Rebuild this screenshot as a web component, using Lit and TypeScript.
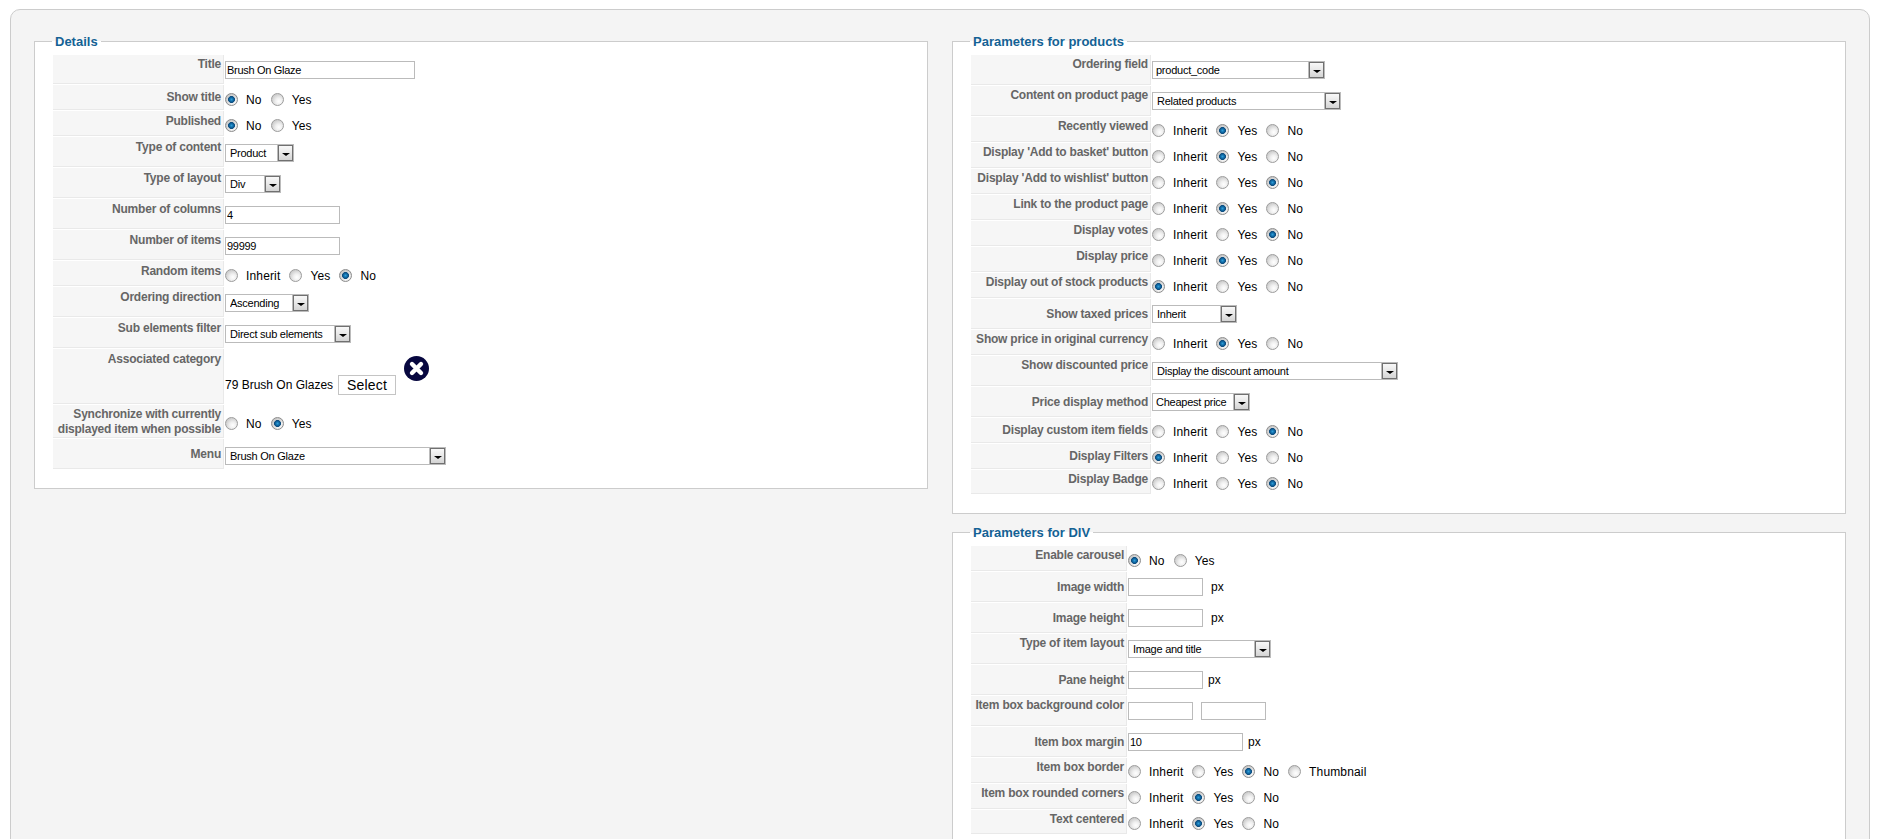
import { LitElement, html, css } from "lit";
import { customElement } from "lit/decorators.js";
import { styleMap } from "lit/directives/style-map.js";

type Ctl =
  | { t: "text"; w: number; v?: string; after?: string; gap?: number }
  | { t: "select"; w: number; v: string; pad?: number }
  | { t: "radio"; opts: string[]; on: number }
  | { t: "pair" }
  | { t: "category" };

interface Row { label: string; h: number; pad: number; top: number; c: Ctl; }

const IYN = ["Inherit", "Yes", "No"];
const r = (label: string, h: number, pad: number, top: number, c: Ctl): Row => ({ label, h, pad, top, c });
const radio = (label: string, on: number, pad = 2, h = 26, opts = IYN, top = 7) =>
  r(label, h, pad, top, { t: "radio", opts, on });

const details: Row[] = [
  r("Title", 30, 2, 6, { t: "text", w: 190, v: "Brush On Glaze" }),
  radio("Show title", 0, 5, 26, ["No", "Yes"], 8),
  radio("Published", 0, 3, 26, ["No", "Yes"], 8),
  r("Type of content", 31, 3, 7, { t: "select", w: 69, v: "Product" }),
  r("Type of layout", 31, 3, 7, { t: "select", w: 56, v: "Div" }),
  r("Number of columns", 31, 3, 7, { t: "text", w: 115, v: "4" }),
  r("Number of items", 31, 3, 7, { t: "text", w: 115, v: "99999" }),
  radio("Random items", 2, 3, 26, IYN, 8),
  r("Ordering direction", 31, 3, 7, { t: "select", w: 84, v: "Ascending" }),
  r("Sub elements filter", 31, 3, 7, { t: "select", w: 126, v: "Direct sub elements" }),
  r("Associated category", 56, 3, 7, { t: "category" }),
  radio("Synchronize with currently displayed item when possible", 1, 2, 34, ["No", "Yes"], 12),
  r("Menu", 31, 8, 8, { t: "select", w: 221, v: "Brush On Glaze" }),
];

const products: Row[] = [
  r("Ordering field", 31, 2, 6, { t: "select", w: 173, v: "product_code", pad: 3 }),
  r("Content on product page", 31, 2, 6, { t: "select", w: 189, v: "Related products" }),
  radio("Recently viewed", 1),
  radio("Display 'Add to basket' button", 1),
  radio("Display 'Add to wishlist' button", 2),
  radio("Link to the product page", 1),
  radio("Display votes", 2),
  radio("Display price", 1),
  radio("Display out of stock products", 0),
  r("Show taxed prices", 31, 8, 6, { t: "select", w: 85, v: "Inherit" }),
  radio("Show price in original currency", 1),
  r("Show discounted price", 31, 2, 6, { t: "select", w: 246, v: "Display the discount amount" }),
  r("Price display method", 31, 8, 6, { t: "select", w: 98, v: "Cheapest price", pad: 3 }),
  radio("Display custom item fields", 2, 5),
  radio("Display Filters", 0, 5),
  radio("Display Badge", 2, 2, 25),
];

const div: Row[] = [
  radio("Enable carousel", 0, 2, 26, ["No", "Yes"], 8),
  r("Image width", 31, 8, 6, { t: "text", w: 75, after: "px", gap: 8 }),
  r("Image height", 31, 8, 6, { t: "text", w: 75, after: "px", gap: 8 }),
  r("Type of item layout", 31, 2, 6, { t: "select", w: 143, v: "Image and title" }),
  r("Pane height", 31, 8, 6, { t: "text", w: 75, after: "px", gap: 5 }),
  r("Item box background color", 31, 2, 6, { t: "pair" }),
  r("Item box margin", 31, 8, 6, { t: "text", w: 115, v: "10", after: "px", gap: 5 }),
  radio("Item box border", 2, 2, 26, ["Inherit", "Yes", "No", "Thumbnail"]),
  radio("Item box rounded corners", 1),
  radio("Text centered", 1, 2, 25),
];

@customElement("app-root")
export class AppRoot extends LitElement {
  static styles = css`
    :host {
      display: block;
      height: 839px;
      overflow: hidden;
      background: #fff;
      font-family: "Liberation Sans", Arial, sans-serif;
      color: #000;
    }
    .panel {
      margin: 9px 7px 0 10px;
      height: 900px;
      box-sizing: border-box;
      background: #f4f4f4;
      border: 1px solid #ccc;
      border-radius: 10px 10px 0 0;
      padding: 24px 23px 0;
      display: grid;
      grid-template-columns: 894px 894px;
      column-gap: 24px;
      align-items: start;
    }
    .col { display: flex; flex-direction: column; gap: 11px; min-width: 0; }
    fieldset {
      margin: 0;
      min-width: 0;
      background: #fff;
      border: 1px solid #ccc;
      padding: 6px 18px 18px;
    }
    legend {
      margin-left: -1px;
      padding: 0 3px;
      font-size: 13px;
      line-height: 15px;
      font-weight: bold;
      color: #146295;
    }
    .row { display: flex; }
    .w171 { --key: 171px; }
    .w180 { --key: 180px; }
    .w156 { --key: 156px; }
    .key {
      flex: none;
      width: var(--key);
      box-sizing: border-box;
      margin-bottom: 1px;
      background: #f6f6f6;
      border-right: 1px solid #e9e9e9;
      border-bottom: 1px solid #e9e9e9;
      padding-right: 2px;
      text-align: right;
      font-size: 12px;
      letter-spacing: -0.22px;
      line-height: 15px;
      font-weight: bold;
      color: #666;
    }
    .val {
      flex: 1;
      display: flex;
      align-items: flex-start;
      margin-left: 1px;
      font-size: 12px;
      line-height: 14px;
    }
    input[type="text"] {
      box-sizing: border-box;
      flex: none;
      height: 18px;
      margin: 0;
      padding: 0 1px;
      background: #fff;
      border: 1px solid #bbb;
      border-radius: 0;
      font: 11px/16px "Liberation Sans", Arial, sans-serif;
      letter-spacing: -0.3px;
      color: #000;
      outline: none;
    }
    input.second[type="text"] { margin-left: 8px; }
    .sel { position: relative; flex: none; height: 18px; display: block; }
    select {
      appearance: none;
      -webkit-appearance: none;
      box-sizing: border-box;
      display: block;
      width: 100%;
      height: 18px;
      margin: 0;
      padding: 0 0 0 var(--sp, 4px);
      background: #fff;
      border: 1px solid #bbb;
      border-radius: 0;
      font: 11px/16px "Liberation Sans", Arial, sans-serif;
      letter-spacing: -0.25px;
      color: #000;
      outline: none;
    }
    .arrow {
      position: absolute;
      top: 0;
      right: 0;
      width: 17px;
      height: 18px;
      box-sizing: border-box;
      border: 1px solid #bbb;
      pointer-events: none;
      display: flex;
    }
    .arrow i {
      flex: 1;
      display: flex;
      align-items: center;
      justify-content: center;
      border: 1px solid #707070;
      background: linear-gradient(#f8f8f8, #e6e6e6 55%, #d4d4d4);
    }
    .arrow b {
      width: 0;
      height: 0;
      margin-top: 3px;
      border-left: 4px solid transparent;
      border-right: 4px solid transparent;
      border-top: 3px solid #000;
    }
    .opt { display: flex; align-items: flex-start; margin-right: 9px; letter-spacing: 0.15px; }
    input[type="radio"] {
      appearance: none;
      -webkit-appearance: none;
      flex: none;
      box-sizing: border-box;
      width: 13px;
      height: 13px;
      margin: 0 8px 0 0;
      border-radius: 50%;
      border: 1px solid #9c9c9c;
      background: radial-gradient(circle 7px at 62% 66%, #fff 0, #f0f0f0 45%, #cfcfcf 100%);
    }
    input[type="radio"]:checked {
      border-color: #8c8c8c;
      background:
        radial-gradient(circle 3.8px at 50% 50%, #2f9ed8 0, #126fab 45%, #0a4a7c 82%, rgba(10, 74, 124, 0) 100%),
        radial-gradient(circle 7px at 62% 66%, #fff 0, #ececec 50%, #c8c8c8 100%);
    }
    .px { padding-top: 2px; }
    .cat-text { padding-top: 22px; }
    .btn {
      flex: none;
      box-sizing: border-box;
      width: 58px;
      height: 20px;
      margin: 19px 0 0 5px;
      padding: 0;
      background: #fff;
      border: 1px solid #c4c4c4;
      border-radius: 0;
      font: 14px/18px "Liberation Sans", Arial, sans-serif;
      letter-spacing: 0.2px;
      color: #000;
    }
    .close { flex: none; width: 25px; height: 25px; margin-left: 8px; display: block; }
  `;

  private control(c: Ctl) {
    switch (c.t) {
      case "text":
        return html`<input type="text" .value=${c.v ?? ""} style=${styleMap({ width: `${c.w}px` })} />
          ${c.after
            ? html`<span class="px" style=${styleMap({ marginLeft: `${c.gap}px` })}>${c.after}</span>`
            : ""}`;
      case "select":
        return html`<span class="sel" style=${styleMap({ width: `${c.w}px`, "--sp": `${c.pad ?? 4}px` })}>
          <select><option>${c.v}</option></select>
          <span class="arrow"><i><b></b></i></span>
        </span>`;
      case "radio":
        return c.opts.map(
          (o, i) => html`<label class="opt">
            <input type="radio" ?checked=${i === c.on} />
            <span>${o}</span>
          </label>`,
        );
      case "pair":
        return html`<input type="text" style=${styleMap({ width: "65px" })} />
          <input class="second" type="text" style=${styleMap({ width: "65px" })} />`;
      case "category":
        return html`<span class="cat-text">79 Brush On Glazes</span>
          <button class="btn">Select</button>
          <svg class="close" viewBox="0 0 25 25">
            <circle cx="12.5" cy="12.5" r="12.5" fill="#07073f" />
            <path d="M8 8 L17 17 M17 8 L8 17" stroke="#fff" stroke-width="4.4" stroke-linecap="round" />
          </svg>`;
    }
  }

  private table(rows: Row[]) {
    return rows.map(
      (row) => html`<div class="row" style=${styleMap({ height: `${row.h}px` })}>
        <div class="key" style=${styleMap({ paddingTop: `${row.pad}px` })}>${row.label}</div>
        <div class="val" style=${styleMap({ paddingTop: `${row.top}px` })}>${this.control(row.c)}</div>
      </div>`,
    );
  }

  render() {
    return html`<div class="panel">
      <div class="col">
        <fieldset class="w171"><legend>Details</legend>${this.table(details)}</fieldset>
      </div>
      <div class="col">
        <fieldset class="w180"><legend>Parameters for products</legend>${this.table(products)}</fieldset>
        <fieldset class="w156"><legend>Parameters for DIV</legend>${this.table(div)}</fieldset>
      </div>
    </div>`;
  }
}
